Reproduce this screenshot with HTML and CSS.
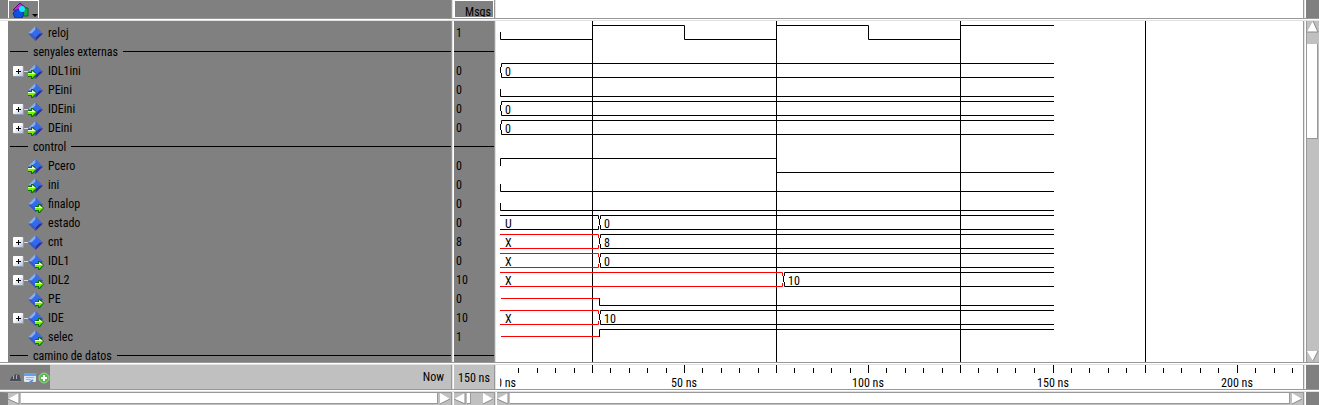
FILE: index.html
```
<!DOCTYPE html>
<html lang="en">
<head>
<meta charset="utf-8">
<title>Wave</title>
<link rel="stylesheet" href="styles.css">
</head>
<body>
<svg class="defs" aria-hidden="true">
  <defs>
    <linearGradient id="box" x1="0" y1="0" x2="1" y2="1"><stop offset=".4" stop-color="#fff"/><stop offset="1" stop-color="#b4c0d8"/></linearGradient>
    <symbol id="sig" viewBox="0 0 16 16">
      <path d="M7.500 0 0 7.500h4l3.500-3.500z" fill="#86aef2"/>
      <path d="M7.500 0 15 7.500h-4l-3.500-3.500z" fill="#4468d4"/>
      <path d="M0 7.500 7.500 15v-4l-3.500-3.500z" fill="#3c58c4"/>
      <path d="M15 7.500 7.500 15v-4l3.500-3.500z" fill="#2c2ca0"/>
      <path d="M7.500 3.500 11.500 7.500 7.500 11.500 3.500 7.500z" fill="#2c6cf4"/>
    </symbol>
    <g id="arrow">
      <path d="M0 2h3V0h2l4 4-4 5H3V7H0z" fill="#087008"/>
      <path d="M0 3h4V1l4 3-4 2H0z" fill="#f4ffd0"/>
      <path d="M0 4h8L4 8V6H0z" fill="#80ee00"/>
    </g>
    <symbol id="sig-in" viewBox="0 0 16 16"><use href="#sig" width="16" height="16"/><use href="#arrow" x="0" y="6"/></symbol>
    <symbol id="sig-out" viewBox="0 0 16 16"><use href="#sig" width="16" height="16"/><use href="#arrow" x="7" y="7"/></symbol>
    <symbol id="plus" viewBox="0 0 11 11">
      <rect width="11" height="11" rx="1" fill="#8c98b0"/><rect width="10" height="10" rx="1" fill="url(#box)"/>
      <path d="M3 5h5v1H3zM5 3h1v5H5z" fill="#000"/>
    </symbol>
    <symbol id="left" viewBox="0 0 12 12"><path d="M11 0v11L0 6z" fill="#fff"/><path d="M0 6l11 5V0" fill="none" stroke="#888"/></symbol>
    <symbol id="right" viewBox="0 0 12 12"><path d="M1 0v11l10-5z" fill="#fff"/><path d="M1 11l10-5" fill="none" stroke="#888"/></symbol>
    <symbol id="up" viewBox="0 0 12 12"><path d="M0 11h11L6 0z" fill="#fff"/><path d="M6 0l5 11H0" fill="none" stroke="#888"/></symbol>
    <symbol id="down" viewBox="0 0 12 12"><path d="M0 1h11L6 11z" fill="#fff"/><path d="M6 11l5-10" fill="none" stroke="#888"/></symbol>
    <path id="low" d="M3 8v7h553"/>
    <path id="bus" d="M556 1H4v3M3 5v5M4 11v4h552"/>
    <path id="bus-old" d="M3 1h98v3M101 12v3H3"/>
    <path id="bus-new" d="M556 1H103v3M102 5v5M103 11v4h453"/>
  </defs>
</svg>

<main class="wave">
  <div class="band head">
    <div class="tools">
      <button class="tool" aria-label="Objects">
        <svg width="26" height="17" viewBox="0 0 26 17">
          <path d="M1 9 8 2l6 5-7 3z" fill="#c428e0" stroke="#50106c"/>
          <path d="M11 7h5v8h-8z" fill="#18a848" stroke="#0c6030"/>
          <path d="M1 12 6 8l6 4-2 5H3z" fill="#0c50e4" stroke="#1030a0"/>
          <circle cx="10" cy="8" r="3" fill="#18e8fc"/>
          <path d="M20 13h6l-3 3z"/>
        </svg>
      </button>
    </div>
    <div class="vsplit"></div>
    <button class="msgs">Msgs</button>
    <div class="vsplit"></div>
    <div class="paper"></div>
    <div class="vsplit"></div>
    <div class="gray"></div>
  </div>
  <div class="hsplit"></div>

  <div class="band body">
    <ul class="names">
      <li class="row"><span class="exp"></span><svg class="icon"><use href="#sig"/></svg>reloj</li>
      <li class="row divider">senyales externas</li>
      <li class="row"><button class="exp" aria-label="Expand IDL1ini"><svg><use href="#plus"/></svg></button><svg class="icon"><use href="#sig-in"/></svg>IDL1ini</li>
      <li class="row"><span class="exp"></span><svg class="icon"><use href="#sig-in"/></svg>PEini</li>
      <li class="row"><button class="exp" aria-label="Expand IDEini"><svg><use href="#plus"/></svg></button><svg class="icon"><use href="#sig-in"/></svg>IDEini</li>
      <li class="row"><button class="exp" aria-label="Expand DEini"><svg><use href="#plus"/></svg></button><svg class="icon"><use href="#sig-in"/></svg>DEini</li>
      <li class="row divider">control</li>
      <li class="row"><span class="exp"></span><svg class="icon"><use href="#sig-in"/></svg>Pcero</li>
      <li class="row"><span class="exp"></span><svg class="icon"><use href="#sig-in"/></svg>ini</li>
      <li class="row"><span class="exp"></span><svg class="icon"><use href="#sig-out"/></svg>finalop</li>
      <li class="row"><span class="exp"></span><svg class="icon"><use href="#sig"/></svg>estado</li>
      <li class="row"><button class="exp" aria-label="Expand cnt"><svg><use href="#plus"/></svg></button><svg class="icon"><use href="#sig"/></svg>cnt</li>
      <li class="row"><button class="exp" aria-label="Expand IDL1"><svg><use href="#plus"/></svg></button><svg class="icon"><use href="#sig-out"/></svg>IDL1</li>
      <li class="row"><button class="exp" aria-label="Expand IDL2"><svg><use href="#plus"/></svg></button><svg class="icon"><use href="#sig-out"/></svg>IDL2</li>
      <li class="row"><span class="exp"></span><svg class="icon"><use href="#sig-out"/></svg>PE</li>
      <li class="row"><button class="exp" aria-label="Expand IDE"><svg><use href="#plus"/></svg></button><svg class="icon"><use href="#sig-out"/></svg>IDE</li>
      <li class="row"><span class="exp"></span><svg class="icon"><use href="#sig-out"/></svg>selec</li>
      <li class="row divider">camino de datos</li>
    </ul>
    <div class="vsplit"></div>
    <ul class="values">
      <li class="row">1</li>
      <li class="row divider"></li>
      <li class="row">0</li>
      <li class="row">0</li>
      <li class="row">0</li>
      <li class="row">0</li>
      <li class="row divider"></li>
      <li class="row">0</li>
      <li class="row">0</li>
      <li class="row">0</li>
      <li class="row">0</li>
      <li class="row">8</li>
      <li class="row">0</li>
      <li class="row">10</li>
      <li class="row">0</li>
      <li class="row">10</li>
      <li class="row">1</li>
      <li class="row divider"></li>
    </ul>
    <div class="vsplit"></div>
    <div class="paper">
      <svg class="plot">
        <g class="trace" transform="translate(.5 .5)">
          <path d="M95 0v900M279 0v900M463 0v900M648 0v900"/>
          <path transform="translate(0 3)" d="M3 8v7h92V1h92v14h92V1h92v14h92V1h93"/>
          <use href="#bus" y="41"/>
          <use href="#low" y="60"/>
          <use href="#bus" y="79"/>
          <use href="#bus" y="98"/>
          <path transform="translate(0 136)" d="M3 8V1h276v14h277"/>
          <use href="#low" y="155"/>
          <use href="#low" y="174"/>
          <use href="#bus-old" y="193"/><use href="#bus-new" y="193"/>
          <use class="unknown" href="#bus-old" y="212"/><use href="#bus-new" y="212"/>
          <use class="unknown" href="#bus-old" y="231"/><use href="#bus-new" y="231"/>
          <g transform="translate(0 250)"><path class="unknown" d="M3 1h282v3M285 12v3H3"/><path d="M556 1H287v3M286 5v5M287 11v4h269"/></g>
          <g transform="translate(0 269)"><path class="unknown" d="M4 8h97"/><path d="M102 8v7h454"/></g>
          <use class="unknown" href="#bus-old" y="288"/><use href="#bus-new" y="288"/>
          <g transform="translate(0 307)"><path class="unknown" d="M4 8h97"/><path d="M102 8V1h454"/></g>
        </g>
        <g class="labels">
          <text x="8" y="55">0</text>
          <text x="8" y="93">0</text>
          <text x="8" y="112">0</text>
          <text x="8" y="207">U</text><text x="107" y="207">0</text>
          <text x="8" y="226">X</text><text x="107" y="226">8</text>
          <text x="8" y="245">X</text><text x="107" y="245">0</text>
          <text x="8" y="264">X</text><text x="291" y="264">10</text>
          <text x="8" y="302">X</text><text x="107" y="302">10</text>
        </g>
      </svg>
    </div>
    <div class="vsplit"></div>
    <div class="vbar">
      <button aria-label="Scroll up"><svg><use href="#up"/></svg></button>
      <div class="vtrack"><div class="vthumb"></div></div>
      <button aria-label="Scroll down"><svg><use href="#down"/></svg></button>
    </div>
  </div>
  <div class="hsplit"></div>

  <div class="band time">
    <div class="now">
      <div class="cursor-tools">
        <button aria-label="Lock"><svg viewBox="0 0 12 12"><path d="M0 8 2 4l2 1 1-3 3 1 1-1 2 7H0z" fill="#484c54"/><path d="M3 4h1v3H3zM6 3h1v4H6z" fill="#aab"/><path d="M0 9.500h10" stroke="#5898e0"/></svg></button>
        <button aria-label="Edit"><svg viewBox="0 0 12 12"><rect x="0" y="1" width="12" height="9" rx="1" fill="#dce8f8"/><path d="M0 1h12v3H0z" fill="#68a0e4"/><path d="M2 5.500h8M2 7.500h5" stroke="#a8b4c8"/><path d="M5 11 9 8" stroke="#6090cc" stroke-width="2"/></svg></button>
        <button aria-label="Add cursor"><svg viewBox="0 0 12 12"><circle cx="6" cy="6" r="5" fill="#5cb850" stroke="#94d488"/><path d="M3 6h6M6 3v6" stroke="#fff" stroke-width="2"/></svg></button>
      </div>
      <span>Now</span>
    </div>
    <div class="vsplit"></div>
    <div class="now-value">150 ns</div>
    <div class="vsplit"></div>
    <div class="paper">
      <svg class="plot">
        <g class="ticks" transform="translate(.5 0)">
          <path d="M95 0v8M187 0v8M279 0v8M371 0v8M463 0v8M556 0v8M648 0v8M740 0v8"/>
          <path d="M21 3v5M40 3v5M58 3v5M77 3v5M113 3v5M132 3v5M150 3v5M169 3v5M205 3v5M224 3v5M242 3v5M261 3v5M297 3v5M316 3v5M334 3v5M353 3v5M389 3v5M408 3v5M426 3v5M445 3v5M481 3v5M500 3v5M518 3v5M537 3v5M574 3v5M592 3v5M611 3v5M629 3v5M666 3v5M684 3v5M703 3v5M721 3v5M758 3v5M777 3v5M795 3v5"/>
        </g>
        <svg x="3" y="0" width="40" height="24"><text x="-4" y="22">0 ns</text></svg>
        <g class="mid">
          <text x="187" y="22">50 ns</text>
          <text x="371" y="22">100 ns</text>
          <text x="556" y="22">150 ns</text>
          <text x="740" y="22">200 ns</text>
        </g>
      </svg>
    </div>
    <div class="vsplit"></div>
    <div class="gray"></div>
  </div>
  <div class="hsplit"></div>

  <div class="band scroll">
    <div class="hbar inset"><button aria-label="Names left"><svg><use href="#left"/></svg></button><div class="htrack"><div class="hthumb"></div></div><button aria-label="Names right"><svg><use href="#right"/></svg></button></div>
    <div class="vsplit"></div>
    <div class="hbar"><button aria-label="Values left"><svg><use href="#left"/></svg></button><div class="htrack"><div class="hthumb short"></div></div><button aria-label="Values right"><svg><use href="#right"/></svg></button></div>
    <div class="vsplit"></div>
    <div class="hbar"><button aria-label="Waves left"><svg><use href="#left"/></svg></button><div class="htrack"><div class="hthumb"></div></div><button aria-label="Waves right"><svg><use href="#right"/></svg></button></div>
    <div class="vsplit"></div>
    <div class="gray"></div>
  </div>
</main>
</body>
</html>
```

FILE: styles.css
```
* { box-sizing: border-box; }

body {
  margin: 0;
  background: #fff;
  color: #000;
  font: 12px/19px "Liberation Sans Narrow", "Arial Narrow", "Roboto Condensed", "Liberation Sans", sans-serif;
}

button {
  margin: 0;
  padding: 0;
  border: 0;
  background: none;
  color: inherit;
  font: inherit;
}

svg { display: block; }

.defs { position: absolute; width: 0; height: 0; }

.wave {
  display: grid;
  grid-template-rows: 18px 3px minmax(0, 1fr) 3px 24px 3px 13px;
  height: 100vh;
}

.band {
  display: grid;
  grid-template-columns: 451px 3px 40px 3px minmax(0, 1fr) 3px 13px;
  min-height: 0;
}

.band > * { min-width: 0; min-height: 0; overflow: hidden; }

.vsplit { border-left: 1px solid #989898; border-right: 1px solid #fff; background: #e2e2e2; }
.hsplit { border-top: 1px solid #989898; border-bottom: 1px solid #e2e2e2; background: #fff; }

.gray, .tools { background: #808080; }
.paper { background: #fff; }

.tools { padding-left: 8px; }
.tool { display: block; width: 31px; height: 18px; padding-left: 3px; border: 1px solid #fff; border-bottom: 0; }
.tool svg { overflow: visible; }

.msgs { padding: 2px 2px 0 0; border: 1px solid #fff; background: #808080; text-align: right; }

.names, .values { margin: 0; padding: 3px 0 0; list-style: none; background: #808080; }
.names { border-left: 8px solid #fff; }

.row { display: flex; align-items: center; height: 19px; white-space: pre; }
.names .row { padding-left: 5px; }
.values .row { padding-left: 2px; }

.exp { display: flex; align-items: center; width: 15px; flex: none; }
.exp svg { width: 11px; height: 11px; flex: none; }
button.exp::after { content: ""; flex: 1; border-top: 1px dashed #d8d8d8; }
.icon { width: 16px; height: 16px; margin-right: 4px; flex: none; }

.names .divider { gap: 5px; padding-left: 2px; }
.divider::after { content: ""; flex: 1; border-top: 1px solid #000; }
.names .divider::before { content: ""; width: 18px; border-top: 1px solid #000; }
.values .divider { padding-left: 0; }
.divider::before, .divider::after { margin-bottom: 3px; }

.plot { width: 100%; height: 100%; }
.trace, .ticks { fill: none; stroke: #000; }
.trace { stroke-linecap: square; }
.unknown { stroke: #f00; }
.mid { text-anchor: middle; }

.now { display: flex; align-items: center; justify-content: space-between; padding-right: 7px; background: #c0c0c0; line-height: 26px; }
.cursor-tools { display: flex; align-items: center; gap: 2px; width: 50px; height: 100%; padding: 2px 0 0 10px; background: #808080; }
.cursor-tools svg { width: 12px; height: 12px; }
.now-value { background: #c0c0c0; line-height: 26px; text-align: center; white-space: nowrap; }

.hbar { display: flex; border-top: 1px solid #989898; background: #c0c0c0; }
.hbar.inset { border-left: 8px solid #808080; }
.hbar button, .vbar button { width: 12px; height: 12px; flex: none; }
.hbar svg, .vbar svg { width: 12px; height: 12px; }
.htrack { flex: 1; padding: 0 1px 1px; }
.hthumb { height: 100%; border: 1px solid #989898; border-width: 0 1px 1px 0; background: #fff; }
.short { width: 4px; }

.vbar { display: flex; flex-direction: column; border-left: 1px solid #989898; background: #c0c0c0; }
.vtrack { flex: 1; padding: 11px 1px 0 0; }
.vthumb { height: 31%; border: 1px solid #989898; border-width: 0 1px 1px 0; background: #fff; }
```
